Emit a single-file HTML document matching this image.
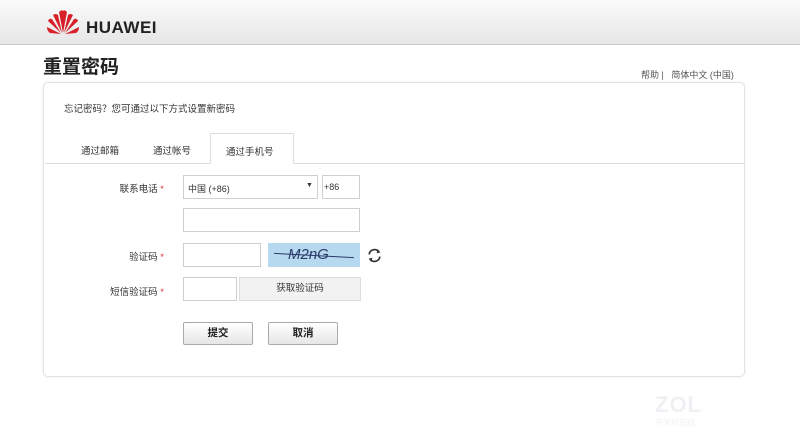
<!DOCTYPE html>
<html><head><meta charset="utf-8"><style>
*{margin:0;padding:0;box-sizing:border-box}
body{width:800px;height:446px;background:#fff;font-family:"Liberation Sans","Noto Sans CJK SC",sans-serif;font-size:10px;color:#333;position:relative;overflow:hidden}
.hd{position:absolute;left:0;top:0;width:800px;height:45px;background:linear-gradient(#fbfbfb,#e6e6e6);border-bottom:1px solid #c8c8c8}
.logo{position:absolute;left:86px;top:18px;font-size:17px;font-weight:bold;color:#222;letter-spacing:0.5px}
h1{position:absolute;left:43px;top:52px;font-size:19px;font-weight:bold;color:#222}
.top{position:absolute;left:641px;top:68px;font-size:9px;color:#555}
.card{position:absolute;left:43px;top:82px;width:702px;height:295px;border:1px solid #e2e2e2;border-radius:5px;box-shadow:0 0 3px #eee}
.abs{position:absolute}
.inp{position:absolute;border:1px solid #cfcfcf;background:#fff;height:24px}
.lbl{position:absolute;font-size:9.5px;color:#333;text-align:right;width:80px}
.lbl b{color:#d33;font-weight:normal}
.btn{position:absolute;width:70px;height:23px;border:1px solid #aaa;border-radius:2px;background:linear-gradient(#fff,#e6e6e6);font-size:10.5px;font-weight:bold;text-align:center;line-height:21px;color:#222}
</style></head><body>
<div class="hd">
<svg class="abs" style="left:46px;top:9px" width="34" height="26" viewBox="0 0 34 26">
<g fill="#d7202a">
<path d="M17 24 L13 3 Q16 0 17 2Z"/><path d="M17 24 L21 3 Q18 0 17 2Z"/>
<path d="M16 24 L7 6 Q10 4 12 6Z"/><path d="M18 24 L27 6 Q24 4 22 6Z"/>
<path d="M15 24 L2 12 Q3 9 6 10Z"/><path d="M19 24 L32 12 Q31 9 28 10Z"/>
<path d="M15 25 L1 18 Q1 22 4 24Z"/><path d="M19 25 L33 18 Q33 22 30 24Z"/>
</g></svg>
<div class="logo">HUAWEI</div>
</div>
<h1>重置密码</h1>
<div class="top">帮助 |&nbsp;&nbsp; 简体中文 (中国)</div>
<div class="card">
<div class="abs" style="left:20px;top:18px;font-size:9.5px">忘记密码？您可通过以下方式设置新密码</div>
<div class="abs" style="left:1px;top:80px;width:699px;border-top:1px solid #ddd"></div>
<div class="abs" style="left:37px;top:60px;font-size:9.5px">通过邮箱</div>
<div class="abs" style="left:109px;top:60px;font-size:9.5px">通过帐号</div>
<div class="abs" style="left:166px;top:50px;width:84px;height:31px;border:1px solid #ddd;border-bottom:1px solid #fff;background:#fff;font-size:9.5px;padding:10px 0 0 15px">通过手机号</div>
</div>
<div class="lbl" style="left:84px;top:181px">联系电话 <b>*</b></div>
<div class="inp" style="left:183px;top:175px;width:135px"><span class="abs" style="left:4px;top:6px;font-size:9px">中国 (+86)</span><span class="abs" style="left:122px;top:6px;font-size:7px">▼</span></div>
<div class="inp" style="left:322px;top:175px;width:38px"><span class="abs" style="left:1px;top:6px;font-size:9px">+86</span></div>
<div class="inp" style="left:183px;top:208px;width:177px"></div>
<div class="lbl" style="left:84px;top:249px">验证码 <b>*</b></div>
<div class="inp" style="left:183px;top:243px;width:78px"></div>
<div class="abs" style="left:268px;top:243px;width:92px;height:24px;background:#b7d9ef"><span class="abs" style="left:20px;top:3px;font-size:15px;color:#2a3a6a;font-style:italic">M2nG</span><div class="abs" style="left:6px;top:12px;width:80px;border-top:1.5px solid #2a3a6a;transform:rotate(3deg)"></div></div>
<svg class="abs" style="left:366px;top:247px" width="17" height="17" viewBox="0 0 16 16"><path d="M3 7A5 5 0 0 1 12 4.5M13 9A5 5 0 0 1 4 11.5" fill="none" stroke="#333" stroke-width="1.6"/><path d="M11 2L13.5 5 10 6Z M5 14L2.5 11 6 10Z" fill="#333"/></svg>
<div class="lbl" style="left:84px;top:284px">短信验证码 <b>*</b></div>
<div class="inp" style="left:183px;top:277px;width:54px"></div>
<div class="abs" style="left:239px;top:277px;width:122px;height:24px;border:1px solid #ddd;background:#f2f2f2;font-size:9.5px;text-align:center;line-height:22px">获取验证码</div>
<div class="btn" style="left:183px;top:322px">提交</div>
<div class="btn" style="left:268px;top:322px">取消</div>
<div class="abs" style="left:655px;top:392px;font-size:22px;font-weight:bold;color:#eef0f3;letter-spacing:1px">ZOL</div>
<div class="abs" style="left:655px;top:417px;font-size:8px;color:#eef0f3">中关村在线</div>
</body></html>
